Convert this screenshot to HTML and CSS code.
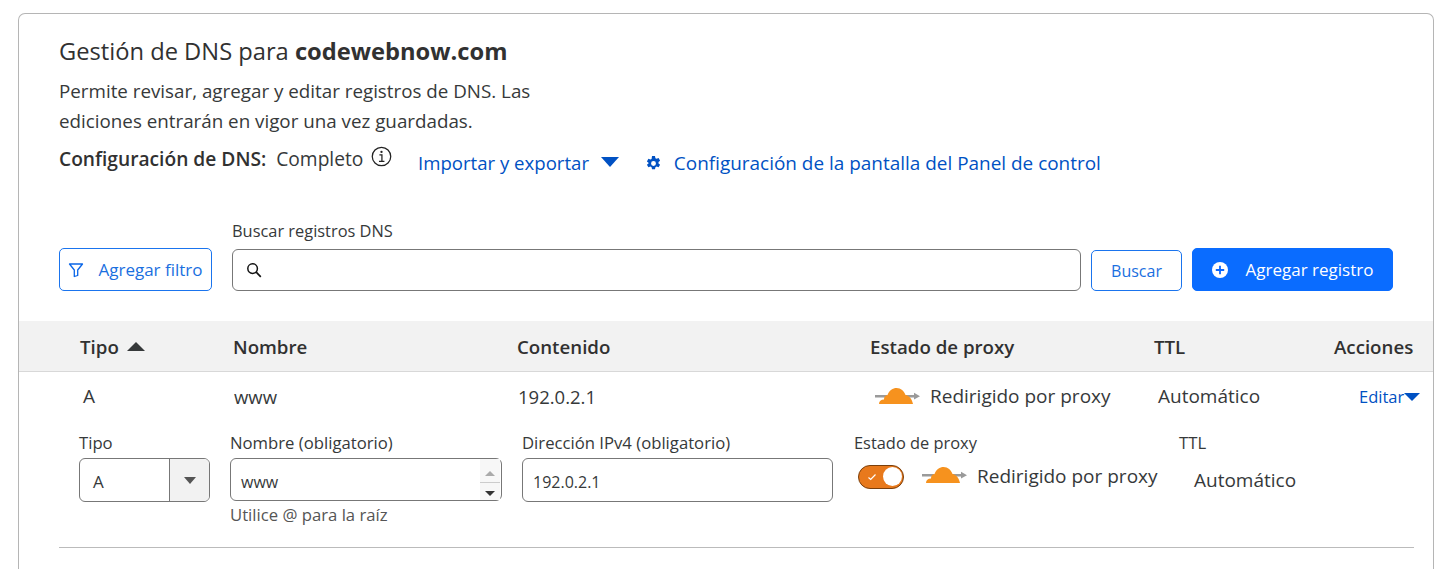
FILE: index.html
```html
<!DOCTYPE html>
<html lang="es">
<head>
  <meta charset="UTF-8">
  <title>Gestión de DNS</title>
  <link rel="stylesheet" href="styles.css">
</head>
<body>
  <div class="card">
    <div class="intro">
      <h1>Gestión de DNS para <b>codewebnow.com</b></h1>
      <p>Permite revisar, agregar y editar registros de DNS. Las<br>ediciones entrarán en vigor una vez guardadas.</p>
      <div class="setup">
        <div class="setup-state">
          <b>Configuración de DNS:</b>
          <span>Completo</span>
          <svg class="info" viewBox="0 0 20 20" width="21" height="21"><circle cx="10" cy="10" r="8.8" fill="none" stroke="#222" stroke-width="1.2"/><path d="M8 8.500h2.400v6M7.600 14.600h5.200" fill="none" stroke="#222" stroke-width="1.200"/><circle cx="10" cy="5.600" r="1.100" fill="#222"/></svg>
        </div>
        <a class="link">Importar y exportar <i class="caret"></i></a>
        <a class="link gear-link">
          <svg viewBox="0 0 16 16" width="17" height="17"><path fill="#0051c3" fill-rule="evenodd" d="M6.600 1h2.800l.4 2 1.100.6 1.900-.7 1.400 2.400-1.500 1.300v1.300l1.500 1.300-1.400 2.400-1.900-.7-1.100.6-.4 2H6.600l-.4-2-1.100-.6-1.900.7-1.400-2.400 1.500-1.300V7.300L1.800 6l1.400-2.400 1.900.7 1.100-.6zM8 5.700a2.300 2.300 0 1 0 0 4.600 2.300 2.300 0 0 0 0-4.600z"/></svg>
          Configuración de la pantalla del Panel de control
        </a>
      </div>
    </div>

    <div class="search-bar">
      <button class="btn filter-btn">
        <svg viewBox="0 0 16 16" width="16" height="16"><path d="M1.500 2h13L9.700 8v5.500l-3.400 1V8z" fill="none" stroke="#0a66e8" stroke-width="1.300" stroke-linejoin="round"/></svg>
        Agregar filtro
      </button>
      <div class="search-field">
        <label>Buscar registros DNS</label>
        <div class="search-input">
          <svg viewBox="0 0 16 16" width="16" height="16"><circle cx="6.600" cy="6.600" r="4.800" fill="none" stroke="#111" stroke-width="1.500"/><path d="M10.200 10.200l4.600 4.600" stroke="#111" stroke-width="1.700"/></svg>
        </div>
      </div>
      <button class="btn search-btn">Buscar</button>
      <button class="btn add-btn">
        <svg viewBox="0 0 16 16" width="16" height="16"><circle cx="8" cy="8" r="8" fill="#fff"/><path d="M8 3.800v8.400M3.800 8h8.400" stroke="#0a66ff" stroke-width="1.800"/></svg>
        Agregar registro
      </button>
    </div>

    <div class="row table-head">
      <div class="col-type">Tipo <i class="sort"></i></div>
      <div class="col-name">Nombre</div>
      <div class="col-content">Contenido</div>
      <div class="col-proxy">Estado de proxy</div>
      <div class="col-ttl">TTL</div>
      <div class="col-actions">Acciones</div>
    </div>

    <div class="row table-row">
      <div class="col-type">A</div>
      <div class="col-name">www</div>
      <div class="col-content">192.0.2.1</div>
      <div class="col-proxy proxy">
        <svg class="cloud" viewBox="0 0 46 18" width="46" height="18"><use href="#cloud"/></svg>
        Redirigido por proxy
      </div>
      <div class="col-ttl">Automático</div>
      <div class="col-actions edit"><a>Editar</a><i class="caret"></i></div>
    </div>

    <form class="edit-form">
      <div class="field f-type">
        <label>Tipo</label>
        <div class="select"><span>A</span><div class="select-arrow"><i class="caret-small"></i></div></div>
      </div>
      <div class="field f-name">
        <label>Nombre (obligatorio)</label>
        <div class="input name-input">
          <span>www</span>
          <div class="spinner"><i class="up"></i><i class="down"></i></div>
        </div>
        <small>Utilice @ para la raíz</small>
      </div>
      <div class="field f-ip">
        <label>Dirección IPv4 (obligatorio)</label>
        <div class="input">192.0.2.1</div>
      </div>
      <div class="field f-proxy">
        <label>Estado de proxy</label>
        <div class="proxy-toggle">
          <div class="toggle">
            <svg viewBox="0 0 10 10" width="10" height="10"><path d="M1.500 5.500l2.200 2L8.500 2.500" fill="none" stroke="#fff" stroke-width="1.200"/></svg>
            <i class="knob"></i>
          </div>
          <svg class="cloud" viewBox="0 0 46 18" width="46" height="18"><use href="#cloud"/></svg>
          <span>Redirigido por proxy</span>
        </div>
      </div>
      <div class="field f-ttl">
        <label>TTL</label>
        <div class="ttl-value">Automático</div>
      </div>
    </form>
    <hr>
  </div>

  <svg width="0" height="0" class="defs">
    <defs>
      <g id="cloud">
        <path d="M0 8h12v2.400H0zM30 8h10v2.400H30z" fill="#9a9a9a"/>
        <path d="M39 5.800l6 3.400-6 3.400z" fill="#9a9a9a"/>
        <path fill="#f6921e" d="M4 17C4 14 6 12.500 9 12.500 9 10 10 8.500 12.500 8 14 3.500 18 1 21.500 1 26 1 29 4 30.500 8 34 8.500 37 12 38 17z"/>
      </g>
    </defs>
  </svg>
</body>
</html>
```
FILE: styles.css
```css
* { margin: 0; padding: 0; box-sizing: border-box; }
html, body { height: 569px; overflow: hidden; }
body { font-family: "Open Sans", "Noto Sans", sans-serif; background: white; color: #36393a; font-size: 18px; padding: 13px 18px 0; }
b { font-weight: 600; }
i { display: inline-block; }
.defs { position: absolute; }

.card {
  width: 1416px;
  height: 556px;
  border: 1px solid #b5b5b5;
  border-bottom: 0;
  border-radius: 7px 7px 0 0;
  background: white;
}

.intro { padding: 20px 40px 0; }
h1 { font-size: 23.700px; font-weight: 400; line-height: 34px; color: #313131; }
h1 b { font-weight: 700; }
.intro p { font-size: 18.800px; line-height: 30px; margin-top: 8px; color: #36393a; }

.setup { display: flex; margin-top: 8px; }
.setup-state { display: flex; align-items: center; gap: 10px; font-size: 19.200px; height: 28px; width: 359px; }
.setup-state b { color: #313131; }
.info { margin-top: -4px; margin-left: -2px; }
.link { color: #0051c3; font-size: 18.600px; line-height: 30px; margin-top: 4px; }
.gear-link { display: flex; align-items: center; gap: 12px; margin-left: 26px; font-size: 18.950px; }
.caret { display: inline-block; width: 0; height: 0; margin-left: 7px; vertical-align: 3px; border-left: 9px solid transparent; border-right: 9px solid transparent; border-top: 10px solid #0051c3; }

.search-bar { display: flex; align-items: flex-end; margin-top: 42px; padding-left: 40px; }
.btn { font-family: inherit; font-size: 17px; height: 43px; border-radius: 5px; background: white; border: 1px solid #1a74ee; color: #1a6fe0; display: flex; align-items: center; justify-content: center; }
.filter-btn { width: 153px; gap: 14px; }
.search-field { width: 849px; margin-left: 20px; }
.search-field label { display: block; font-size: 16.400px; line-height: 22px; margin-bottom: 7px; color: #36393a; }
.search-input { height: 42px; border: 1px solid #777; border-radius: 6px; padding: 12px 13px; }
.search-input svg { display: block; }
.search-btn { width: 91px; height: 41px; margin-left: 10px; font-size: 16px; }
.add-btn { width: 201px; margin-left: 10px; gap: 18px; background: #0a6cff; border-color: #0a6cff; color: white; }

.row { display: flex; align-items: center; }
.col-type { padding-left: 61px; width: 214px; }
.col-name { width: 284px; }
.col-content { width: 353px; }
.col-proxy { width: 284px; }
.col-ttl { width: 180px; }

.table-head { margin-top: 30px; height: 51px; background: #f2f2f2; border-bottom: 1px solid #d8d8d8; font-weight: 600; font-size: 18.700px; color: #313131; }
.sort { width: 0; height: 0; margin-left: 3px; vertical-align: 3px; border-left: 9px solid transparent; border-right: 9px solid transparent; border-bottom: 9px solid #36393a; }

.table-row { height: 46px; padding-top: 2px; font-size: 19px; }
.table-row .col-type { padding-left: 64px; }
.table-row .col-name { padding-left: 1px; font-size: 18.500px; }
.table-row .col-content { padding-left: 1px; font-size: 18.500px; }
.table-row .col-ttl { padding-left: 4px; }
.proxy { display: flex; align-items: center; gap: 9px; padding-left: 5px; }
.edit { color: #0051c3; font-size: 16.500px; display: flex; align-items: center; margin-left: 25px; margin-top: 1px; }
.edit .caret { margin-left: 0; border-width: 8px 8px 0; }

.edit-form { display: flex; padding: 14px 0 0 60px; height: 129px; }
.field label { display: block; font-size: 16.700px; line-height: 22px; margin-bottom: 4px; color: #36393a; }
.f-type { width: 151px; }
.f-name { width: 292px; }
.f-ip { width: 332px; }
.f-proxy { width: 325px; }
.f-proxy label { font-size: 16.400px; margin-bottom: 5px; }
.select { display: flex; width: 131px; height: 44px; border: 1px solid #777; border-radius: 6px; font-size: 17px; overflow: hidden; }
.select span { flex: 1; padding: 11px 13px; }
.select-arrow { width: 40px; background: #f2f2f2; border-left: 1px solid #777; display: flex; align-items: center; justify-content: center; }
.caret-small { width: 0; height: 0; border-left: 6px solid transparent; border-right: 6px solid transparent; border-top: 7px solid #555; }

.input { height: 44px; border: 1px solid #777; border-radius: 6px; font-size: 16px; padding: 12px 10px; color: #36393a; width: 311px; }
.name-input { width: 272px; height: 43px; display: flex; justify-content: space-between; padding-right: 1px; }
.spinner { margin-top: -12px; width: 20px; height: 41px; display: flex; flex-direction: column; align-items: center; justify-content: space-around; background: #f7f7f7; }
.spinner .up { width: 100%; height: 20px; position: relative; border-bottom: 1px solid #ccc; }
.spinner .up::after { content: ""; position: absolute; left: 5px; top: 8px; border-left: 5px solid transparent; border-right: 5px solid transparent; border-bottom: 5px solid #aaa; }
.spinner .down { border-left: 5px solid transparent; border-right: 5px solid transparent; border-top: 5px solid #333; }
small { display: block; font-size: 16.700px; line-height: 22px; margin-top: 3px; color: #555; }

.proxy-toggle { display: flex; align-items: center; gap: 18px; margin-top: -2px; margin-left: 4px; height: 36px; font-size: 19px; }
.proxy-toggle span { margin-left: -9px; margin-top: 2px; }
.toggle { display: flex; align-items: center; justify-content: space-between; width: 46px; height: 24px; border-radius: 12px; background: #e8791c; border: 1px solid #7a3f0c; padding: 0 1px 0 8px; margin-top: 3px; }
.knob { width: 19px; height: 19px; border-radius: 50%; background: white; }
.ttl-value { font-size: 19px; padding-left: 15px; margin-top: 13px; }

hr { border: 0; border-top: 1px solid #bbb; margin: 0 19px 0 40px; }
```
